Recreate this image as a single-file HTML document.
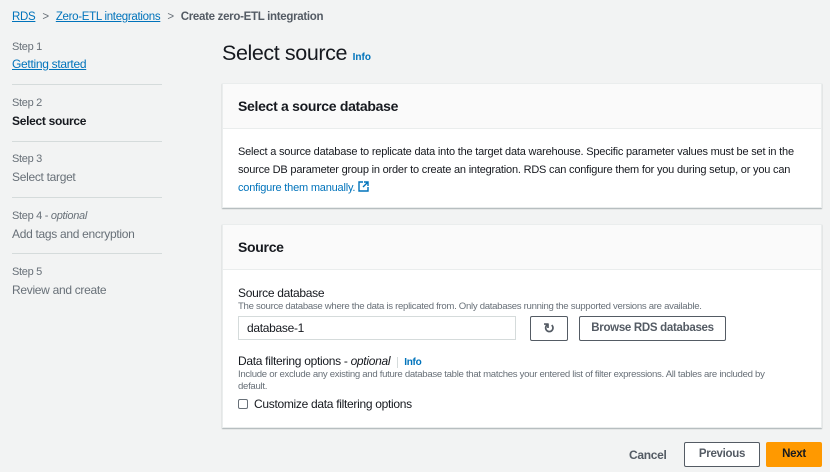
<!DOCTYPE html>
<html><head><style>
*{box-sizing:border-box;margin:0;padding:0}
body{width:830px;height:472px;background:#f2f3f3;font-family:"Liberation Sans",sans-serif;color:#16191f;position:relative;overflow:hidden;font-size:12px;letter-spacing:-.3px}
.a{position:absolute;white-space:nowrap}
.lnk{color:#0073bb;text-decoration:underline}
.step{color:#687078;font-size:11px}
.sep{position:absolute;left:12px;width:150px;height:1px;background:#d5dbdb}
.card{position:absolute;left:222px;width:600px;background:#fff;border:1px solid #eaeded;box-shadow:0 1px 1px rgba(0,28,36,.3)}
.hd{background:#fafafa;border-bottom:1px solid #eaeded;height:45px;padding:14px 15px;font-weight:bold;font-size:14px}
.btn{position:absolute;border:1px solid #545b64;background:#fff;font-weight:bold;color:#545b64;text-align:center;font-size:11.5px;border-radius:2px}
.desc{color:#687078;font-size:9.6px;letter-spacing:-.3px}
</style></head><body>
<div class="a" style="left:12px;top:11px;font-size:11.5px"><span class="lnk">RDS</span><span style="color:#687078;margin:0 7px">&gt;</span><span class="lnk">Zero-ETL integrations</span><span style="color:#687078;margin:0 7px">&gt;</span><span style="color:#545b64;font-weight:bold">Create zero-ETL integration</span></div>

<div class="a step" style="left:12px;top:41px">Step 1</div>
<div class="a lnk" style="left:12px;top:57px">Getting started</div>
<div class="sep" style="top:84px"></div>
<div class="a step" style="left:12px;top:97px">Step 2</div>
<div class="a" style="left:12px;top:114px;font-weight:bold">Select source</div>
<div class="sep" style="top:141px"></div>
<div class="a step" style="left:12px;top:153px">Step 3</div>
<div class="a" style="left:12px;top:170px;color:#687078">Select target</div>
<div class="sep" style="top:197px"></div>
<div class="a step" style="left:12px;top:210px">Step 4 - <i>optional</i></div>
<div class="a" style="left:12px;top:227px;color:#687078">Add tags and encryption</div>
<div class="sep" style="top:253px"></div>
<div class="a step" style="left:12px;top:266px">Step 5</div>
<div class="a" style="left:12px;top:283px;color:#687078">Review and create</div>

<div class="a" style="left:222px;top:41px;font-size:21.5px;letter-spacing:-.4px">Select source <span style="font-size:10px;color:#0073bb;font-weight:bold;letter-spacing:0">Info</span></div>

<div class="card" style="top:83px;height:125px">
<div class="hd">Select a source database</div>
<div style="padding:14px 15px;line-height:18px;font-size:11px;letter-spacing:-.2px;white-space:nowrap">Select a source database to replicate data into the target data warehouse. Specific parameter values must be set in the<br>source DB parameter group in order to create an integration. RDS can configure them for you during setup, or you can<br><span style="color:#0073bb">configure them manually.</span> <svg width="11" height="11" viewBox="0 0 11 11" style="vertical-align:-1px"><path d="M5 1H1v9h9V6M6 1h4v4M10 1L5 6" stroke="#0073bb" stroke-width="1.4" fill="none"/></svg></div>
</div>

<div class="card" style="top:224px;height:204px">
<div class="hd">Source</div>
<div class="a" style="left:15px;top:61px">Source database</div>
<div class="a desc" style="left:15px;top:76px">The source database where the data is replicated from. Only databases running the supported versions are available.</div>
<div class="a" style="left:15px;top:91px;width:278px;height:24px;border:1px solid #d5dbdb;padding:4px 8px">database-1</div>
<div class="btn" style="left:307px;top:91px;width:38px;height:25px;padding-top:3px;font-size:14px">&#x21bb;</div>
<div class="btn" style="left:356px;top:91px;width:147px;height:25px;padding-top:5px">Browse RDS databases</div>
<div class="a" style="left:15px;top:129px">Data filtering options - <i>optional</i> <span style="border-left:1px solid #d5dbdb;margin-left:4px;padding-left:6px;color:#0073bb;font-weight:bold;font-size:10px">Info</span></div>
<div class="a desc" style="left:15px;top:144px;line-height:12px">Include or exclude any existing and future database table that matches your entered list of filter expressions. All tables are included by<br>default.</div>
<div class="a" style="left:15px;top:174px;width:10px;height:10px;border:1px solid #687078;border-radius:2px"></div>
<div class="a" style="left:31px;top:172px">Customize data filtering options</div>
</div>

<div class="a" style="left:629px;top:448px;font-weight:bold;color:#545b64">Cancel</div>
<div class="btn" style="left:684px;top:442px;width:76px;height:25px;padding-top:5px">Previous</div>
<div class="btn" style="left:766px;top:442px;width:56px;height:25px;padding-top:5px;background:#ff9900;border-color:#ff9900;color:#16191f">Next</div>
</body></html>
